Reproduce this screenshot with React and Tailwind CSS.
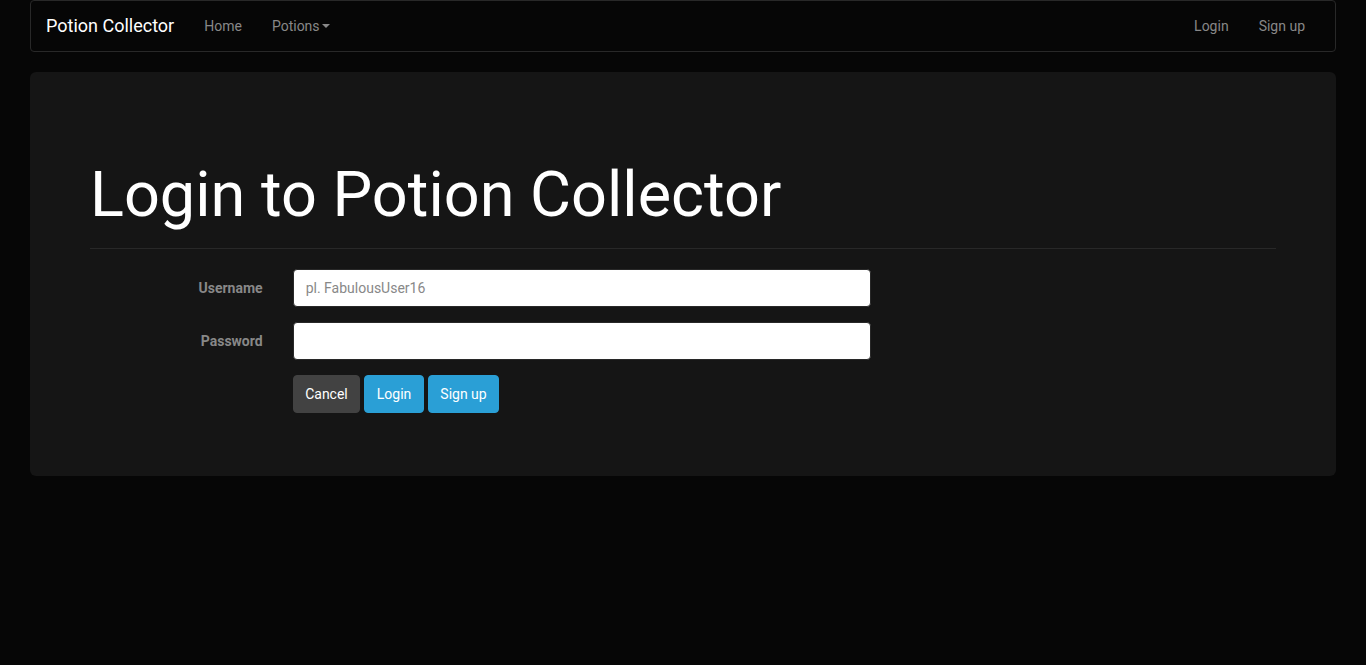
import React from "react";

const NavLink = ({ children, caret }) => (
  <a href="#" className="flex items-center px-[15px] h-[50px] text-[14px] text-[#888888] hover:text-white">
    {children}
    {caret && (
      <span className="ml-[2px] inline-block w-0 h-0 border-x-[4px] border-x-transparent border-t-[4px] border-t-[#888888]" />
    )}
  </a>
);

const Field = ({ label, type = "text", placeholder }) => (
  <div className="flex mb-[15px]">
    <label className="w-[calc(100%/6)] px-[15px] pt-[9px] text-right text-[14px] leading-[20px] font-bold text-[#888888]">
      {label}
    </label>
    <div className="w-1/2 px-[15px]">
      <input
        type={type}
        placeholder={placeholder}
        className="block w-full h-[38px] px-[12px] py-[8px] bg-white border border-[#282828] rounded-[4px] text-[14px] text-[#888888] placeholder:text-[#888888] outline-none"
      />
    </div>
  </div>
);

const Btn = ({ children, primary, type = "button" }) => (
  <button
    type={type}
    className={
      primary
        ? "h-[38px] px-[11.5px] rounded-[4px] border border-[#2a9fd6] bg-[#2a9fd6] text-white text-[14px]"
        : "h-[38px] px-[11.5px] rounded-[4px] border border-[#424242] bg-[#424242] text-white text-[14px]"
    }
  >
    {children}
  </button>
);

const App = () => {
  return (
    <div className="min-h-screen bg-[#060606] font-['Roboto','Liberation_Sans',sans-serif] text-[14px] leading-[20px]">
      <div className="px-[30px]">
        <nav className="flex items-center justify-between h-[52px] pr-[15px] border border-[#282828] rounded-[4px] bg-[#060606]">
          <div className="flex items-center">
            <a href="#" className="px-[15px] text-[18px] leading-[20px] text-white">Potion Collector</a>
            <NavLink>Home</NavLink>
            <NavLink caret>Potions</NavLink>
          </div>
          <div className="flex items-center">
            <NavLink>Login</NavLink>
            <NavLink>Sign up</NavLink>
          </div>
        </nav>

        <div className="mt-[20px] bg-[#151515] rounded-[6px] px-[60px] pt-[48px] pb-[48px]">
          <div className="mt-[40px] mb-[20px] pb-[9px] border-b border-[#282828]">
            <h1 className="text-[63px] leading-[69px] font-normal text-white mb-[10px]">
              Login to Potion Collector
            </h1>
          </div>
          <form className="-mx-[15px]" onSubmit={(e) => e.preventDefault()}>
            <Field label="Username" placeholder="pl. FabulousUser16" />
            <Field label="Password" type="password" />
            <div className="flex mb-[15px]">
              <div className="w-[calc(100%/6)]" />
              <div className="px-[15px] flex gap-[4px]">
                <Btn>Cancel</Btn>
                <Btn primary type="submit">Login</Btn>
                <Btn primary>Sign up</Btn>
              </div>
            </div>
          </form>
        </div>
      </div>
    </div>
  );
};

export default App;
